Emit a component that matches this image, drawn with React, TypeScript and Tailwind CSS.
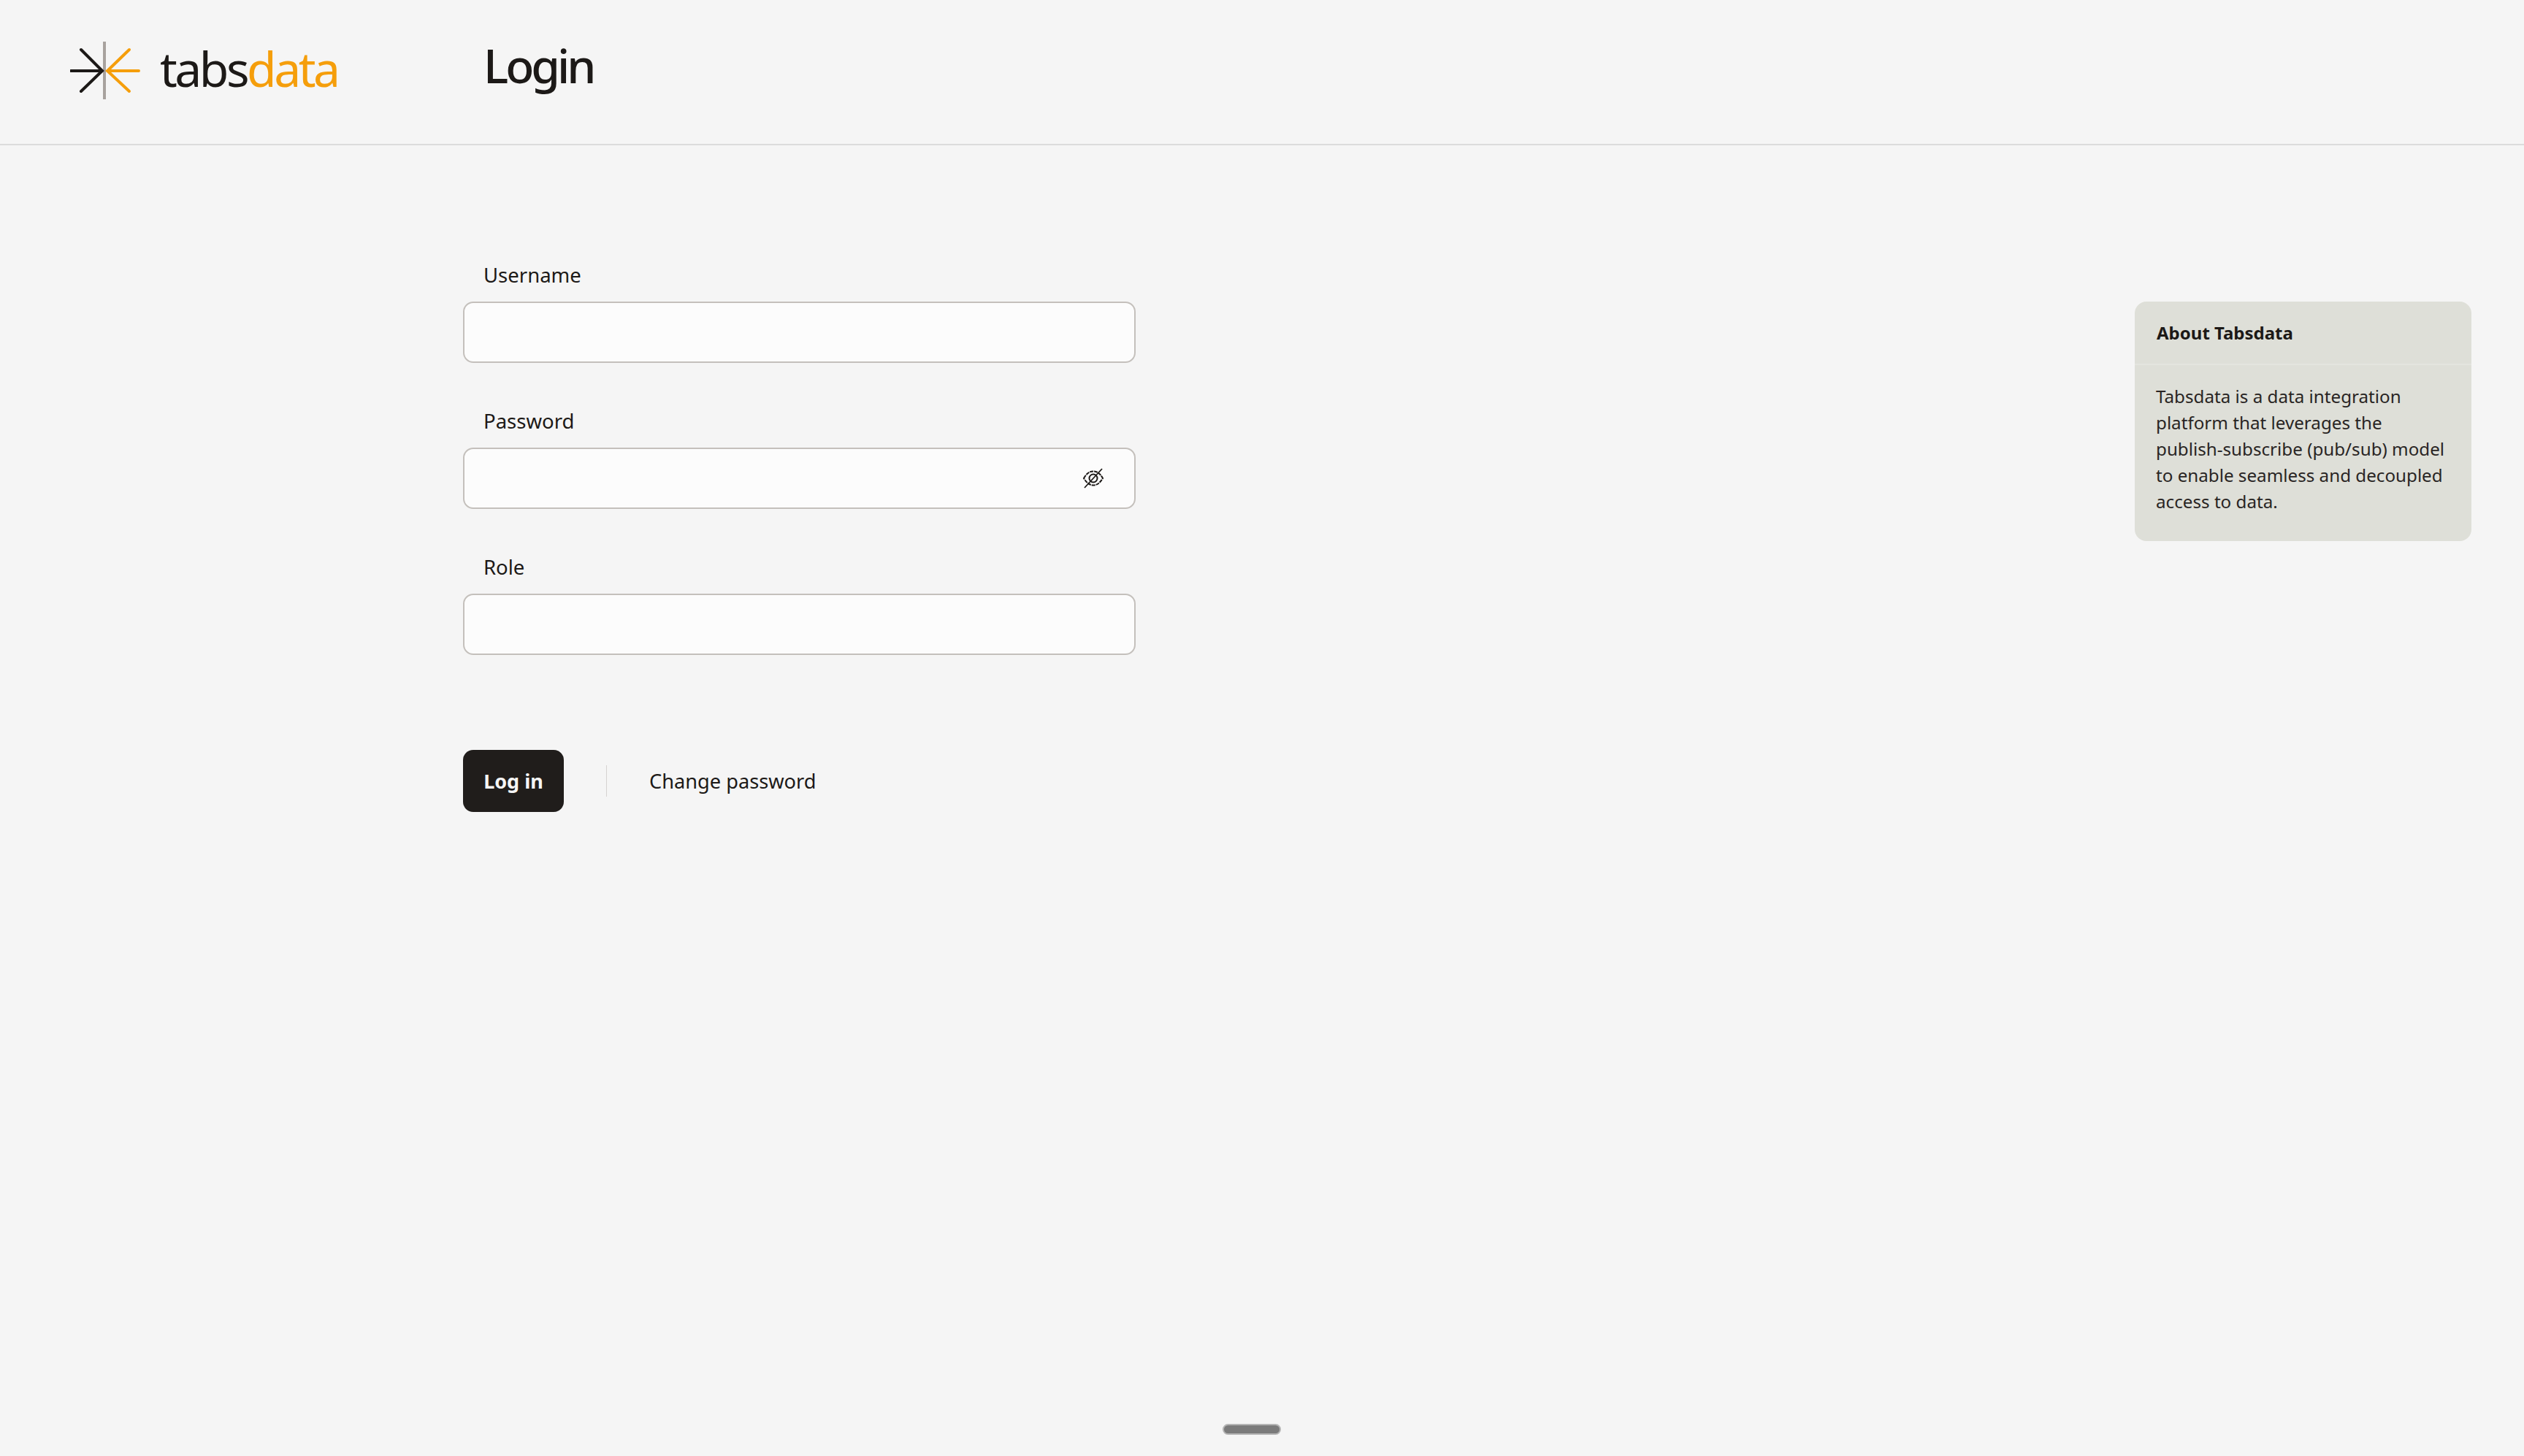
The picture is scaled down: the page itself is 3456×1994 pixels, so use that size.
function Logo() {
  return (
    <svg width="100" height="84" viewBox="0 0 100 84" fill="none" className="shrink-0 mb-[4px]">
      <path d="M47 2V81" stroke="#a8a29e" strokeWidth="4" />
      <path d="M1 42H44M15 13L44 42L15 70" stroke="#1c1917" strokeWidth="4" strokeLinecap="round" strokeLinejoin="miter" />
      <path d="M94 42H51M81 13L51 42L81 70" stroke="#f59e0b" strokeWidth="4" strokeLinecap="round" strokeLinejoin="miter" />
    </svg>
  );
}

function EyeSlash() {
  return (
    <svg width="30" height="28" viewBox="0 0 30 28" fill="none" stroke="#1c1917" strokeWidth="2">
      <path d="M2 14C6 7 10 4.5 15 4.5S24 7 28 14C24 20.5 20 23.5 15 23.5S6 20.5 2 14Z" strokeDasharray="5 1" />
      <circle cx="15" cy="14" r="5.5" />
      <path d="M3 27L27 1" strokeWidth="1.8" />
    </svg>
  );
}

function Field({ label, icon }: { label: string; icon?: boolean }) {
  return (
    <div className="flex flex-col">
      <label className="pl-[28px] h-[53px] text-[27.5px] leading-[34px] text-[#1c1917]">{label}</label>
      <div className="flex items-center justify-end h-[84px] rounded-[14px] border-2 border-[#c4c0bc] bg-[#fcfcfc] pr-[41px]">
        {icon && <EyeSlash />}
      </div>
    </div>
  );
}

export default function App() {
  return (
    <div className="relative min-h-screen bg-[#f5f5f5] text-[#1c1917] font-['Noto_Sans',sans-serif] overflow-hidden">
      <header className="flex items-center h-[199px] border-b-2 border-[#dcdcdc] pl-[96px]">
        <Logo />
        <span className="ml-[23px] w-[238px] text-[66px] leading-none font-normal tracking-[-3.5px] whitespace-nowrap pb-[12px]">
          tabs<span className="text-[#f59e0b]">data</span>
        </span>
        <h1 className="ml-[205px] text-[64px] leading-none font-medium tracking-[-4px] pb-[17px]">Login</h1>
      </header>
      <main className="flex justify-between pt-[161px] pl-[634px] pr-[72px]">
        <div className="w-[921px]">
          <div className="flex flex-col gap-[63px]">
            <Field label="Username" />
            <Field label="Password" icon />
            <Field label="Role" />
          </div>
          <div className="flex items-center mt-[130px]">
            <button className="w-[138px] h-[85px] rounded-[14px] bg-[#201d1b] text-[#f5f5f5] text-[27px] font-bold pt-[2px]">Log in</button>
            <div className="w-px h-[43px] bg-[#d6d3d1] ml-[58px]" />
            <a className="ml-[58px] pt-[2px] text-[27.2px] text-[#1c1917]">Change password</a>
          </div>
        </div>
        <aside className="mt-[53px] w-[461px] h-[328px] rounded-[16px] bg-[#dedfd8]">
          <div className="flex items-center h-[87px] pl-[30px] border-b-2 border-[#e4e5df] text-[24px] font-bold">About Tabsdata</div>
          <p className="pl-[29px] pr-[30px] pt-[25px] text-[24.2px] leading-[36px] text-[#292524]">
            Tabsdata is a data integration platform that leverages the publish-subscribe (pub/sub) model to enable seamless and decoupled access to data.
          </p>
        </aside>
      </main>
      <div className="absolute left-[1674px] top-[1950px] w-[80px] h-[15px] rounded-full bg-[#7b7b7b] border-2 border-[#b5b5b5]" />
    </div>
  );
}
